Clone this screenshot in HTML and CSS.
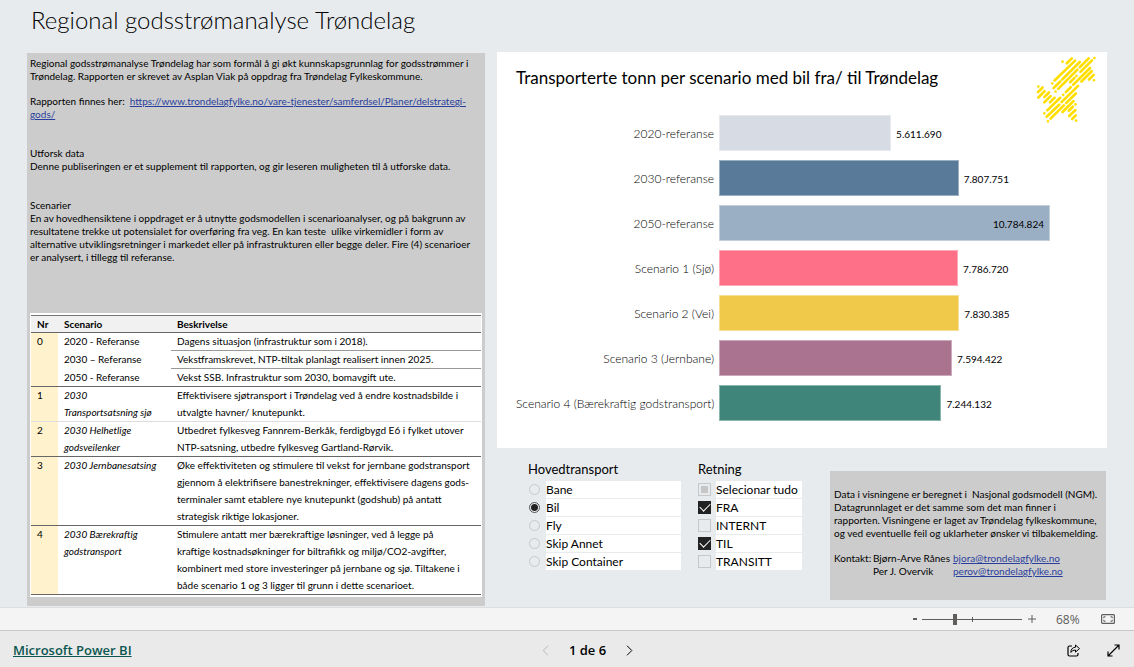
FILE: index.html
```html
<!DOCTYPE html>
<html lang="no">
<head>
<meta charset="utf-8">
<title>Regional godsstrømanalyse Trøndelag</title>
<link rel="stylesheet" href="styles.css">
</head>
<body>
<main class="report">
  <h1 class="report-title">Regional godsstrømanalyse Trøndelag</h1>
  <section class="intro">
    <div class="intro-text">
      <p>Regional godsstrømanalyse Trøndelag har som formål å gi økt kunnskapsgrunnlag for godsstrømmer i<br>Trøndelag. Rapporten er skrevet av Asplan Viak på oppdrag fra Trøndelag Fylkeskommune.</p>
      <p>Rapporten finnes her:&nbsp; <a href="https://www.trondelagfylke.no/vare-tjenester/samferdsel/Planer/delstrategi-gods/">https://www.trondelagfylke.no/vare-tjenester/samferdsel/Planer/delstrategi-<br>gods/</a></p>
      <h2>Utforsk data</h2>
      <p>Denne publiseringen er et supplement til rapporten, og gir leseren muligheten til å utforske data.</p>
      <h2>Scenarier</h2>
      <p>En av hovedhensiktene i oppdraget er å utnytte godsmodellen i scenarioanalyser, og på bakgrunn av<br>resultatene trekke ut potensialet for overføring fra veg. En kan teste&nbsp; ulike virkemidler i form av<br>alternative utviklingsretninger i markedet eller på infrastrukturen eller begge deler. Fire (4) scenarioer<br>er analysert, i tillegg til referanse.</p>
    </div>
    <div class="table-frame">
      <table class="scenarios">
        <thead>
          <tr><th class="nr">Nr</th><th class="name">Scenario</th><th class="gutter"></th><th>Beskrivelse</th></tr>
        </thead>
        <tbody>
          <tr class="sub"><td class="nr" rowspan="3">0</td><td class="name">2020 - Referanse</td><td class="desc" colspan="2">Dagens situasjon (infrastruktur som i 2018).</td></tr>
          <tr class="sub"><td class="name">2030 – Referanse</td><td class="desc" colspan="2">Vekstframskrevet, NTP-tiltak planlagt realisert innen 2025.</td></tr>
          <tr><td class="name">2050 - Referanse</td><td class="desc" colspan="2">Vekst SSB. Infrastruktur som 2030, bomavgift ute.</td></tr>
          <tr class="faint"><td class="nr">1</td><td class="name"><em>2030<br>Transportsatsning sjø</em></td><td class="desc" colspan="2">Effektivisere sjøtransport i Trøndelag ved å endre kostnadsbilde i<br>utvalgte havner/ knutepunkt.</td></tr>
          <tr><td class="nr">2</td><td class="name"><em>2030 Helhetlige<br>godsveilenker</em></td><td class="desc" colspan="2">Utbedret fylkesveg Fannrem-Berkåk, ferdigbygd E6 i fylket utover<br>NTP-satsning, utbedre fylkesveg Gartland-Rørvik.</td></tr>
          <tr><td class="nr">3</td><td class="name"><em>2030 Jernbanesatsing</em></td><td class="desc" colspan="2">Øke effektiviteten og stimulere til vekst for jernbane godstransport<br>gjennom å elektrifisere banestrekninger, effektivisere dagens gods-<br>terminaler samt etablere nye knutepunkt (godshub) på antatt<br>strategisk riktige lokasjoner.</td></tr>
          <tr><td class="nr">4</td><td class="name"><em>2030 Bærekraftig<br>godstransport</em></td><td class="desc" colspan="2">Stimulere antatt mer bærekraftige løsninger, ved å legge på<br>kraftige kostnadsøkninger for biltrafikk og miljø/CO2-avgifter,<br>kombinert med store investeringer på jernbane og sjø. Tiltakene i<br>både scenario 1 og 3 ligger til grunn i dette scenarioet.</td></tr>
        </tbody>
      </table>
    </div>
  </section>

  <div class="side">
    <section class="chart">
      <h2 class="chart-title">Transporterte tonn per scenario med bil fra/ til Trøndelag</h2>
      <svg class="logo" viewBox="48 30 184 206" aria-hidden="true">
        <path d="M128 49h.1M141 54l15-15M104 106l62-60M97 115h.1M101 129l20-20M127 103l53-53M115 131l58-58M180 66l27-27M224 38h.1M151 111l13-13M170 92h.1M182 80l35-35M107 139h.1M160 119l51-51M130 149h.1M138 141l15-15M185 109l31-31M208 103l14-14M223 105h.1M125 171l50-49M139 174l29-29M55 124h.1M54 141l14-14M55 157l19-19M73 156l14-14M73 172l19-19M90 172l14-14M82 196l39-38M80 215l38-36M73 205h.1M92 221l40-40M84 229h.1M128 201l33-33M147 197l12-12M167 178h.1M148 213l19-18M157 222l11-11M169 227h.1"/>
      </svg>
      <ul class="bars">
        <li><span class="label">2020-referanse</span><span class="track"><span class="bar c2020" style="width:52%"></span><span class="value">5.611.690</span></span></li>
        <li><span class="label">2030-referanse</span><span class="track"><span class="bar c2030" style="width:72.4%"></span><span class="value">7.807.751</span></span></li>
        <li><span class="label">2050-referanse</span><span class="track"><span class="bar c2050" style="width:100%"><span class="value">10.784.824</span></span></span></li>
        <li><span class="label">Scenario 1 (Sjø)</span><span class="track"><span class="bar s1" style="width:72.2%"></span><span class="value">7.786.720</span></span></li>
        <li><span class="label">Scenario 2 (Vei)</span><span class="track"><span class="bar s2" style="width:72.6%"></span><span class="value">7.830.385</span></span></li>
        <li><span class="label">Scenario 3 (Jernbane)</span><span class="track"><span class="bar s3" style="width:70.4%"></span><span class="value">7.594.422</span></span></li>
        <li><span class="label">Scenario 4 (Bærekraftig godstransport)</span><span class="track"><span class="bar s4" style="width:67.2%"></span><span class="value">7.244.132</span></span></li>
      </ul>
    </section>
    <div class="lower">
      <fieldset class="slicer transport">
        <legend>Hovedtransport</legend>
        <label><input type="radio" name="transport"><span>Bane</span></label>
        <label><input type="radio" name="transport" checked><span>Bil</span></label>
        <label><input type="radio" name="transport"><span>Fly</span></label>
        <label><input type="radio" name="transport"><span>Skip Annet</span></label>
        <label><input type="radio" name="transport"><span>Skip Container</span></label>
      </fieldset>
      <fieldset class="slicer direction">
        <legend>Retning</legend>
        <label><input type="checkbox" class="partial"><span>Selecionar tudo</span></label>
        <label><input type="checkbox" checked><span>FRA</span></label>
        <label><input type="checkbox"><span>INTERNT</span></label>
        <label><input type="checkbox" checked><span>TIL</span></label>
        <label><input type="checkbox"><span>TRANSITT</span></label>
      </fieldset>
      <aside class="note">
        <p>Data i visningene er beregnet i&nbsp; Nasjonal godsmodell (NGM).<br>Datagrunnlaget er det samme som det man finner i<br>rapporten. Visningene er laget av Trøndelag fylkeskommune,<br>og ved eventuelle feil og uklarheter ønsker vi tilbakemelding.</p>
        <div class="contacts">
          <span>Kontakt:</span><span>Bjørn-Arve Rånes</span><a href="mailto:bjora@trondelagfylke.no">bjora@trondelagfylke.no</a>
          <span></span><span>Per J. Overvik</span><a href="mailto:perov@trondelagfylke.no">perov@trondelagfylke.no</a>
        </div>
      </aside>
    </div>
  </div>
</main>

<div class="zoombar">
  <button type="button" aria-label="Zoom ut"><svg width="6" height="12" viewBox="0 0 6 12"><path d="M1 6h4" stroke-width="2"/></svg></button>
  <input class="zoom" type="range" min="0" max="100" value="32" aria-label="Zoom">
  <button type="button" aria-label="Zoom inn"><svg width="8" height="12" viewBox="0 0 8 12"><path d="M0 6h8M4 2v8"/></svg></button>
  <span class="percent">68%</span>
  <button type="button" aria-label="Tilpass til siden"><svg width="14" height="10" viewBox="0 0 14 10"><rect x=".6" y=".6" width="12.8" height="8.8" rx="1" stroke-width="1.2"/><path d="M4.500 2.800H2.800v1.400M2.800 5.800v1.400h1.700M9.500 2.800h1.700v1.400M11.200 5.800v1.400H9.500"/></svg></button>
</div>

<footer class="footer">
  <a class="brand" href="https://powerbi.microsoft.com">Microsoft Power BI</a>
  <nav class="pager">
    <button type="button" disabled aria-label="Forrige side"><svg width="7" height="11" viewBox="0 0 7 11"><path d="M6 .7L1.200 5.500 6 10.300"/></svg></button>
    <span>1 de 6</span>
    <button type="button" aria-label="Neste side"><svg width="7" height="11" viewBox="0 0 7 11"><path d="M1 .7l4.800 4.800L1 10.300"/></svg></button>
  </nav>
  <div class="actions">
    <button type="button" aria-label="Del"><svg width="14" height="13" viewBox="0 0 14 13"><path d="M5 2H2.500Q1 2 1 3.500v7Q1 12 2.500 12h7Q11 12 11 10.500V9" stroke-width="1.200"/><path d="M8.500 1l4 3.600-4 3.500V6Q5.500 5.900 3.800 8.400 4 3.600 8.500 3.200z"/></svg></button>
    <button type="button" aria-label="Full skjerm"><svg width="13" height="13" viewBox="0 0 13 13"><path d="M1 12L12 1M7.500 1H12v4.500M1 7.500V12h4.500" stroke-width="1.200"/></svg></button>
  </div>
</footer>
</body>
</html>
```

FILE: styles.css
```css
* {
  box-sizing: border-box;
}

body {
  margin: 0;
  min-height: 100vh;
  display: flex;
  flex-direction: column;
  background: #e7ebee;
  color: #000;
  font-family: Lato, "Open Sans", sans-serif;
}

h1, h2, p, ul {
  margin: 0;
  padding: 0;
  font-weight: inherit;
}

button {
  display: flex;
  padding: 0;
  border: 0;
  background: none;
  color: inherit;
}

svg {
  fill: none;
  stroke: currentColor;
}

.report {
  flex: 1;
  display: grid;
  grid-template-columns: 458fr 610fr;
  grid-template-rows: 52px 1fr;
  column-gap: 12px;
  padding: 0 27px 1px;
}

.report-title {
  grid-column: 1 / -1;
  padding: 5px 4px 0;
  font-size: 24px;
  line-height: 30px;
  font-weight: 300;
}

.intro {
  display: flex;
  flex-direction: column;
  justify-content: space-between;
  margin-top: 1px;
  padding: 4px 3px 9px;
  background: #ccc;
}

.intro-text {
  font-size: 10px;
  line-height: 13px;
  white-space: nowrap;
}

.intro-text p + p {
  margin-top: 12px;
}

.intro-text h2 {
  margin-top: 26px;
  font-size: 10px;
  font-weight: 400;
}

a {
  color: #2a3f9d;
}

.table-frame {
  padding: 2px 1px;
  background: #fff;
}

.scenarios {
  width: 100%;
  border-collapse: collapse;
  border-top: 1px solid #777;
  font-size: 10px;
  line-height: 17px;
  text-align: left;
  white-space: nowrap;
}

.scenarios th, .scenarios td {
  padding: 0;
  vertical-align: top;
  border-bottom: 1px solid #666;
}

.scenarios th {
  background: #f1f1f1;
  line-height: 16px;
}

.scenarios .nr {
  width: 27px;
  padding-left: 6px;
}

.scenarios td.nr {
  background: #fff2cc;
}

.scenarios .name {
  width: 113px;
  padding-left: 6px;
}

.scenarios .gutter {
  width: 6px;
}

.scenarios .desc {
  padding-left: 6px;
}

.scenarios .sub .desc {
  border-bottom-color: #999;
}

.scenarios .sub .name {
  border-bottom-color: #fff;
}

.scenarios .faint td {
  border-bottom-color: #ddd;
}

.side {
  display: flex;
  flex-direction: column;
}

.chart {
  position: relative;
  padding: 16px 57px 27px 19px;
  background: #fff;
}

.chart-title {
  margin-bottom: 27px;
  font-size: 17px;
  line-height: 20px;
}

.logo {
  position: absolute;
  top: 3px;
  right: 10px;
  width: 61px;
  height: 69px;
  stroke: #ffde00;
  stroke-width: 8;
  stroke-linecap: round;
}

.bars {
  display: grid;
  gap: 9px;
  list-style: none;
  font-weight: 300;
}

.bars li {
  display: flex;
  align-items: center;
  height: 36px;
}

.label {
  width: 203px;
  padding-right: 5px;
  font-size: 12px;
  text-align: right;
  white-space: nowrap;
}

.track {
  flex: 1;
  display: flex;
  align-items: center;
  height: 100%;
}

.bar {
  flex: none;
  display: flex;
  align-items: center;
  justify-content: flex-end;
  height: 100%;
  border: 1px solid rgba(255, 255, 255, 0.4);
}

.value {
  padding: 2px 5px 0;
  font-size: 10px;
  font-weight: 400;
}

.c2020 { background: #d7dbe3; }
.c2030 { background: #597a99; }
.c2050 { background: #9bafc4; }
.s1 { background: #fd7087; }
.s2 { background: #f0c94a; }
.s3 { background: #aa738f; }
.s4 { background: #3f8579; }

.lower {
  display: flex;
  align-items: flex-start;
  padding: 13px 1px 0 31px;
}

.slicer {
  display: flex;
  flex-direction: column;
  min-width: 0;
  margin: 0;
  padding: 0;
  border: 0;
  font-size: 12px;
  line-height: 17px;
}

.slicer legend {
  padding: 0;
  margin-bottom: 3px;
  font-size: 13px;
  line-height: 16px;
}

.slicer label {
  display: flex;
  align-items: center;
  height: 18px;
}

.slicer label span {
  flex: 1;
  height: 17px;
  background: #fff;
}

.transport {
  width: 153px;
  margin-right: 17px;
}

.direction {
  width: 104px;
  margin-right: 28px;
}

.slicer input {
  flex: none;
  appearance: none;
  margin: 0;
  border: 1px solid #c6c8ca;
}

.slicer input[type="radio"] {
  width: 11px;
  height: 11px;
  margin: 0 6px 0 1px;
  border-radius: 50%;
}

.slicer input[type="radio"]:checked {
  border-color: #555;
  background: radial-gradient(circle, #222 0 3px, transparent 4px);
}

.slicer input[type="checkbox"] {
  width: 13px;
  height: 13px;
  margin-right: 5px;
}

.slicer .partial {
  padding: 2px;
  background: #c6c6c6 content-box;
}

.slicer input[type="checkbox"]:checked {
  display: grid;
  place-items: center;
  border-color: #222;
  background: #222;
}

.slicer input[type="checkbox"]:checked::after {
  content: "";
  width: 9px;
  height: 5px;
  border: solid #fff;
  border-width: 0 0 1px 1px;
  rotate: -45deg;
  translate: 0 -1px;
}

.note {
  flex: 1;
  margin-top: 10px;
  padding: 17px 4px 22px;
  background: #ccc;
  font-size: 10px;
  line-height: 13px;
  white-space: nowrap;
}

.contacts {
  display: grid;
  grid-template-columns: 37px 78px 1fr;
  column-gap: 2px;
  margin-top: 12px;
}

.zoombar {
  display: flex;
  align-items: center;
  justify-content: flex-end;
  height: 24px;
  padding-right: 19px;
  border-top: 1px solid #dcdee0;
  border-bottom: 1px solid #c8c8c8;
  background: #f4f4f4;
  color: #605e5c;
}

.zoom {
  appearance: none;
  width: 100px;
  height: 12px;
  margin: 0 6px 0 4px;
  background:
    linear-gradient(#605e5c, #605e5c) 50px 4px / 1px 5px no-repeat,
    linear-gradient(#605e5c, #605e5c) 0 6px / 100% 1px no-repeat;
}

.zoom::-webkit-slider-thumb {
  appearance: none;
  width: 4px;
  height: 11px;
  background: #605e5c;
}

.percent {
  width: 45px;
  padding-left: 20px;
  margin-right: 20px;
  font-family: "Open Sans", sans-serif;
  font-size: 12px;
}

.footer {
  display: grid;
  grid-template-columns: 1fr auto 1fr;
  align-items: center;
  height: 36px;
  padding: 2px 14px 0 13px;
  background: #eaeaea;
  font-family: "Open Sans", sans-serif;
  font-size: 13px;
  font-weight: 600;
}

.brand {
  color: #0b5650;
}

.pager {
  display: flex;
  align-items: center;
  gap: 20px;
  margin-left: 42px;
}

.pager button:disabled {
  color: #b8b8b8;
}

.actions {
  display: flex;
  justify-content: flex-end;
  gap: 26px;
}
```
